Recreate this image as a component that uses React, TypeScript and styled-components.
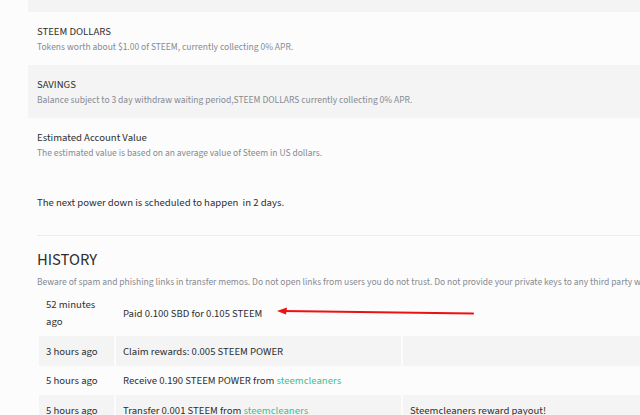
import React from "react";
import styled, { createGlobalStyle } from "styled-components";

const GlobalStyle = createGlobalStyle`
  html, body {
    margin: 0;
    padding: 0;
    background: #fcfcfc;
    overflow: hidden;
  }
  body {
    font-family: "Source Sans 3", "Open Sans", "Liberation Sans", sans-serif;
    color: #333333;
  }
`;

const Page = styled.div`
  position: relative;
  width: 900px;
  padding-left: 28px;
`;

const WalletRow = styled.div<{ $striped?: boolean; $h?: number }>`
  background: ${(p) => (p.$striped ? "#f4f4f4" : "#fcfcfc")};
  height: ${(p) => p.$h ?? 53}px;
  box-sizing: border-box;
  padding: 11px 9px 0;
`;

const RowTitle = styled.div`
  font-size: 10.7px;
  line-height: 17px;
  color: #2e2e2e;
`;

const RowDesc = styled.div`
  font-size: 9.5px;
  line-height: 15px;
  color: #878a91;
  white-space: nowrap;
`;

const PowerDown = styled.div`
  padding: 23px 9px 0;
  height: 64px;
  box-sizing: border-box;
  font-size: 10.7px;
  line-height: 18px;
  color: #2e2e2e;
`;

const Divider = styled.hr`
  border: none;
  border-top: 1px solid #ececec;
  margin: 0 0 0 9px;
`;

const History = styled.section`
  padding: 12px 9px 0;
`;

const Heading = styled.h2`
  margin: 0;
  font-weight: 400;
  font-size: 16.5px;
  line-height: 24px;
  color: #2e2e2e;
`;

const Warning = styled.p`
  margin: 2.5px 0 0;
  font-size: 9.5px;
  line-height: 15px;
  color: #878a91;
  white-space: nowrap;
`;

const Table = styled.table`
  margin-left: 2px;
  border-collapse: collapse;
  table-layout: fixed;
  width: 760px;
`;

const Tr = styled.tr<{ $striped?: boolean }>`
  background: ${(p) => (p.$striped ? "#f4f4f4" : "transparent")};
`;

const Td = styled.td<{ $w?: number }>`
  width: ${(p) => (p.$w ? `${p.$w}px` : "auto")};
  padding: 6.5px 7px 6px;
  font-size: 10.7px;
  line-height: 17px;
  color: #2e2e2e;
  vertical-align: middle;
  border-right: 2px solid #fcfcfc;
`;

const Link = styled.a`
  color: #3cbf91;
  text-decoration: none;
`;

const Arrow = styled.svg`
  position: absolute;
  left: 273px;
  top: 304px;
  width: 204px;
  height: 16px;
  overflow: visible;
`;

export default function App() {
  return (
    <>
      <GlobalStyle />
      <Page>
        <WalletRow $striped $h={12} />
        <WalletRow>
          <RowTitle>STEEM DOLLARS</RowTitle>
          <RowDesc>Tokens worth about $1.00 of STEEM, currently collecting 0% APR.</RowDesc>
        </WalletRow>
        <WalletRow $striped>
          <RowTitle>SAVINGS</RowTitle>
          <RowDesc>
            Balance subject to 3 day withdraw waiting period,STEEM DOLLARS currently collecting 0% APR.
          </RowDesc>
        </WalletRow>
        <WalletRow>
          <RowTitle>Estimated Account Value</RowTitle>
          <RowDesc>The estimated value is based on an average value of Steem in US dollars.</RowDesc>
        </WalletRow>
        <PowerDown>The next power down is scheduled to happen&nbsp; in 2 days.</PowerDown>
        <Divider />
        <History>
          <Heading>HISTORY</Heading>
          <Warning>
            Beware of spam and phishing links in transfer memos. Do not open links from users you do not trust. Do not provide your private keys to any third party websites.
          </Warning>
          <Table>
            <tbody>
              <Tr>
                <Td $w={61}>52 minutes ago</Td>
                <Td $w={271}>Paid 0.100 SBD for 0.105 STEEM</Td>
                <Td></Td>
              </Tr>
              <Tr $striped>
                <Td>3 hours ago</Td>
                <Td>Claim rewards: 0.005 STEEM POWER</Td>
                <Td></Td>
              </Tr>
              <Tr>
                <Td>5 hours ago</Td>
                <Td>
                  Receive 0.190 STEEM POWER from <Link href="#">steemcleaners</Link>
                </Td>
                <Td></Td>
              </Tr>
              <Tr $striped>
                <Td>5 hours ago</Td>
                <Td>
                  Transfer 0.001 STEEM from <Link href="#">steemcleaners</Link>
                </Td>
                <Td>Steemcleaners reward payout!</Td>
              </Tr>
            </tbody>
          </Table>
        </History>
        <Arrow viewBox="0 0 204 16">
          <line x1="10" y1="7" x2="200" y2="9.5" stroke="#ee1111" strokeWidth="2.2" strokeLinecap="round" />
          <polygon points="4,7 14,3.5 13,10.5" fill="#ee1111" />
        </Arrow>
      </Page>
    </>
  );
}
